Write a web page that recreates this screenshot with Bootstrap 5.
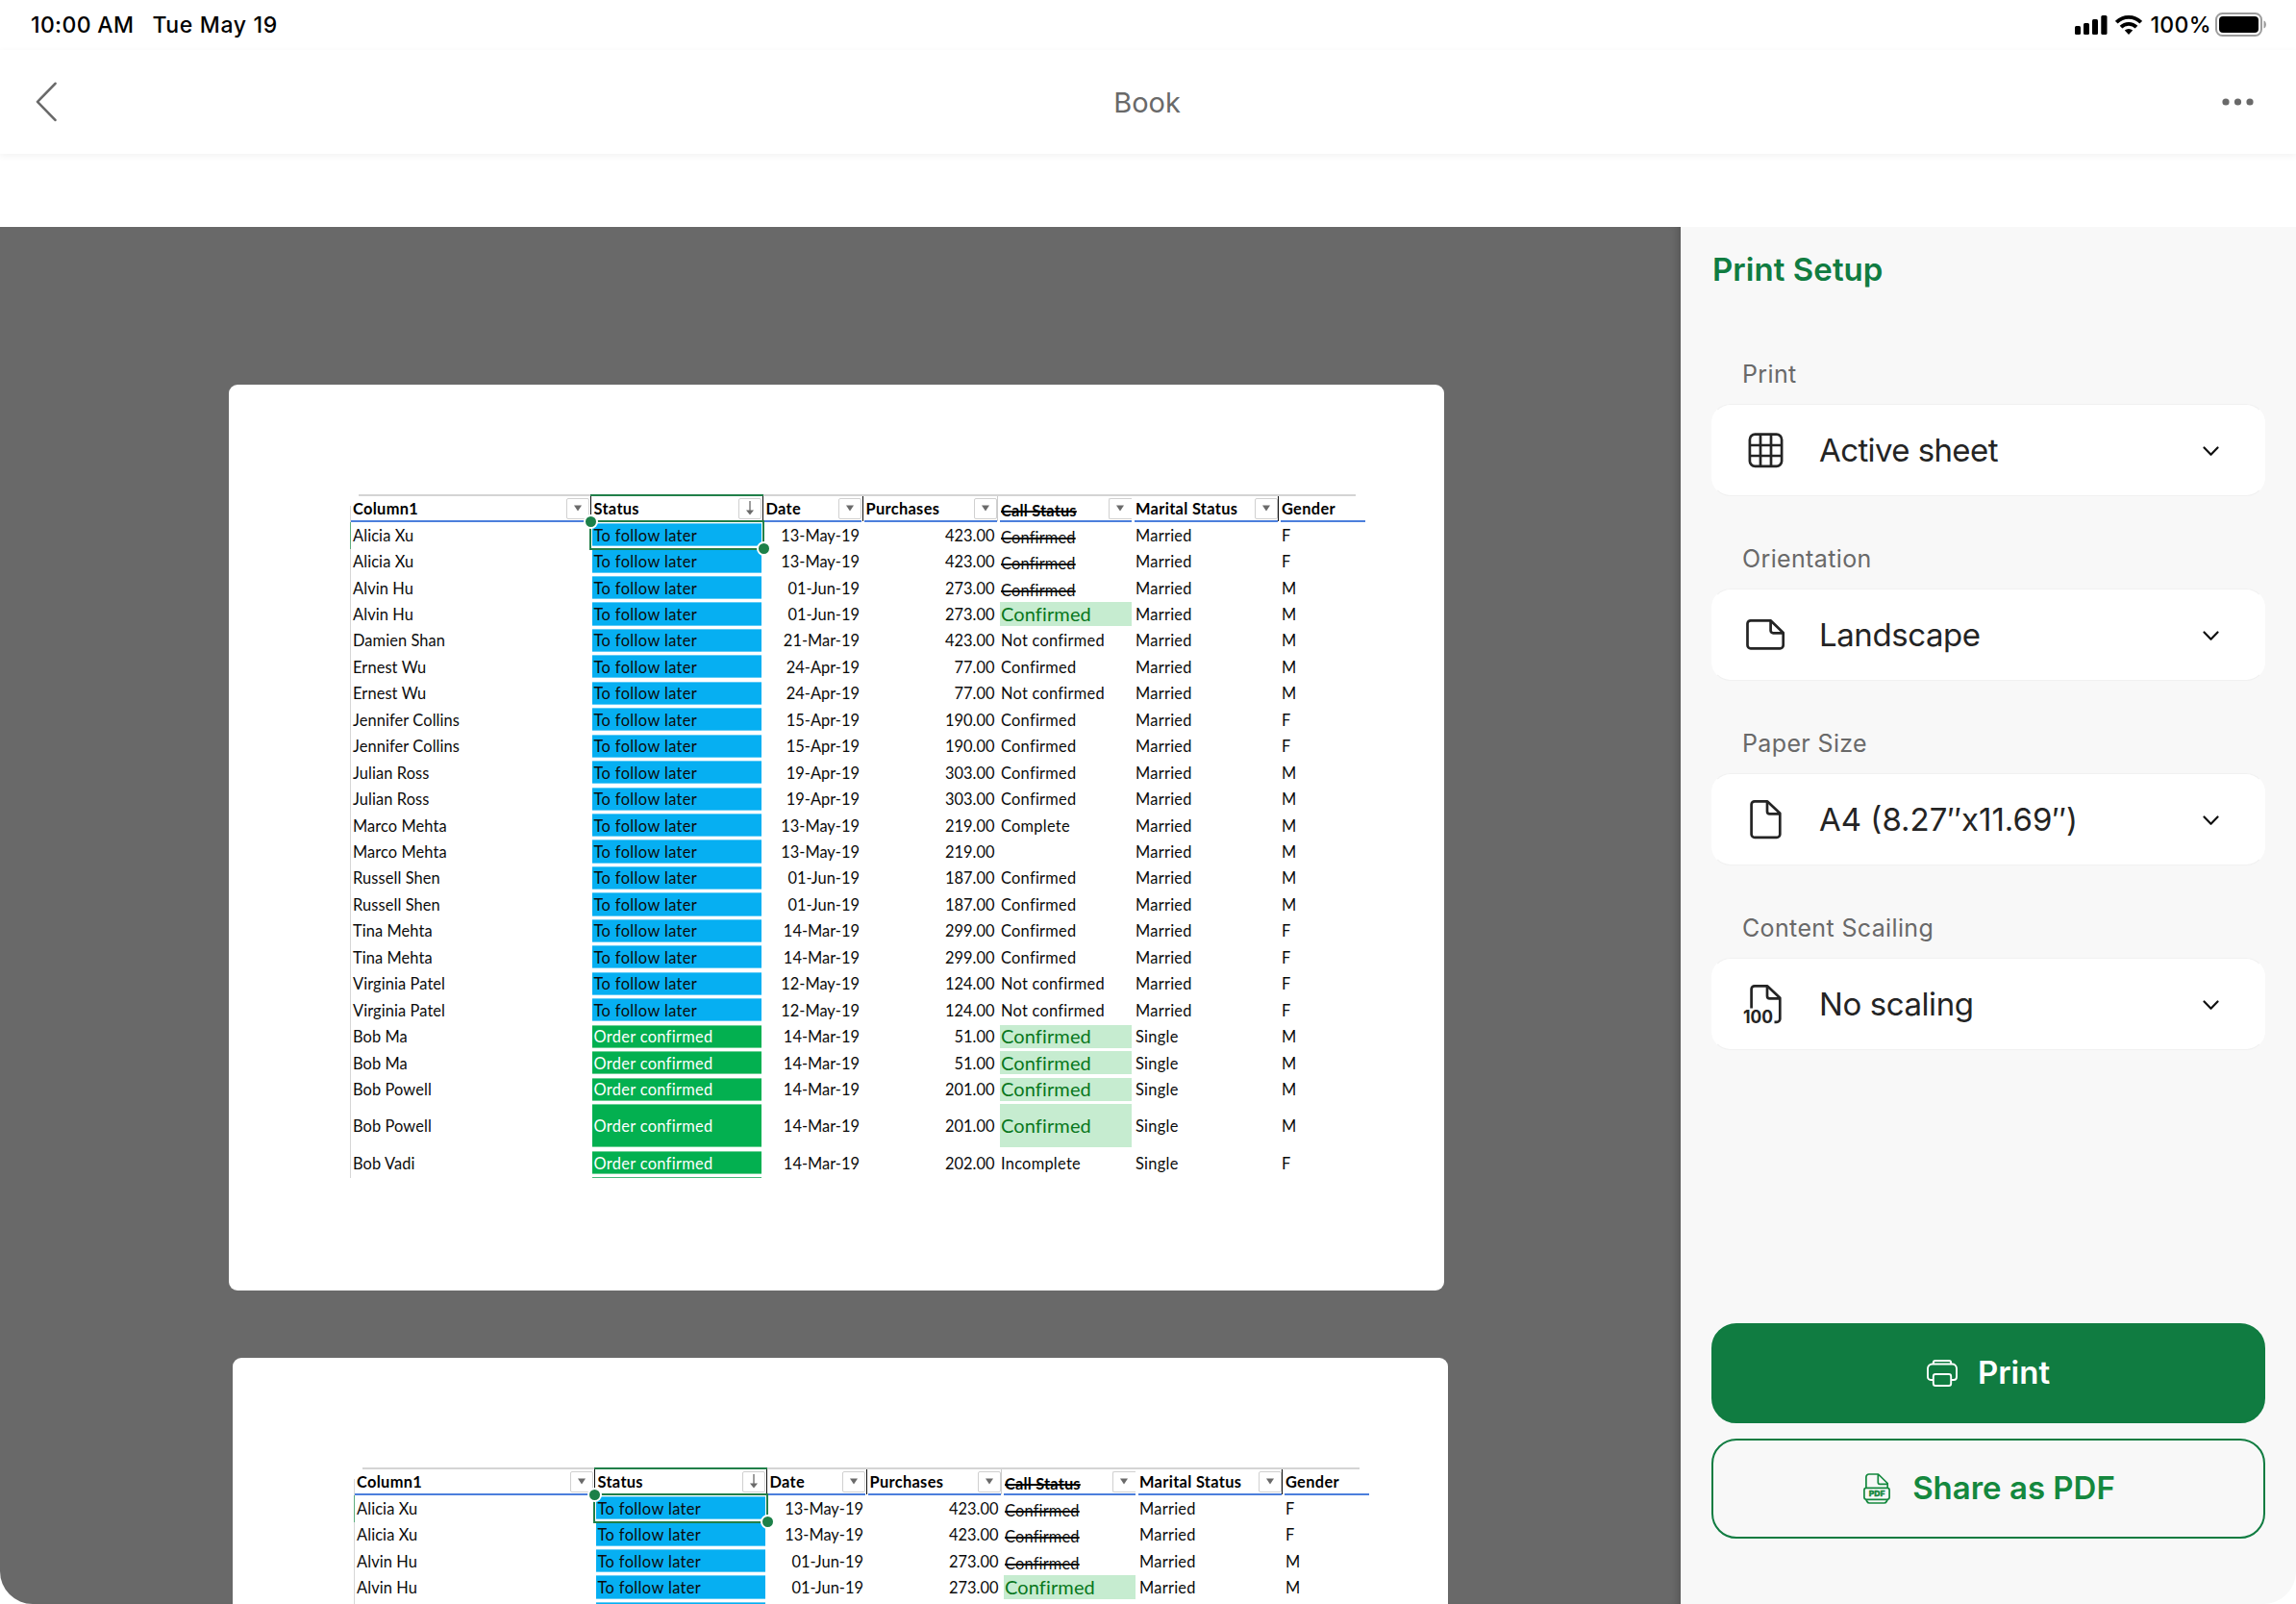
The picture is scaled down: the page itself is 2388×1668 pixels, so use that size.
<!DOCTYPE html>
<html lang="en">
<head>
<meta charset="utf-8">
<meta name="viewport" content="width=device-width, initial-scale=1">
<title>Book – Print Setup</title>
<link href="https://cdn.jsdelivr.net/npm/bootstrap@5.3.0/dist/css/bootstrap.min.css" rel="stylesheet">
<style>
  :root { --brand: #107c41; --ink: #242424; --muted: #696969; }
  body { font-family: Inter, "Liberation Sans", sans-serif; color: var(--ink); background: #fff; }
  svg { display: block; flex: none; }
  .screen { height: 1668px; }

  /* status bar and title bar */
  .statusbar { height: 52px; padding: 0 31px 0 32px; font-size: 23px; font-weight: 500; color: #000; letter-spacing: .36px; }
  .status-date { margin-left: 19px; letter-spacing: .66px; }
  .titlebar { height: 108px; padding: 0 44px 0 36px; color: var(--muted); box-shadow: 0 2px 7px rgba(0,0,0,.055); }
  .doc-title { font-size: 29px; line-height: 1; margin-left: 16px; }
  .ribbon-gap { height: 76px; }

  /* preview */
  .preview { width: 1748px; background: #696969; border-bottom-left-radius: 34px; padding: 164px 0 0 238px; box-shadow: inset -9px 0 8px -6px rgba(0,0,0,.18); }
  .sheet { width: 1264px; height: 942px; background: #fff; border-radius: 9px; padding: 114px 82px 0 126px; flex: none; }
  .sheet + .sheet { height: 400px; margin: 70px 0 0 4px; }

  .tgrid { font-family: Lato, Carlito, sans-serif; font-size: 16.4px; letter-spacing: .27px; line-height: 19px; color: #0b0b0b; width: 1056px; position: relative; }
  .tgrid::before { content: ""; position: absolute; top: 0; left: 9px; right: 10px; height: 2px; background: #d4d4d4; }
  .tgrid::after { content: ""; position: absolute; top: 12px; left: 0; height: 699px; border-left: 1px solid #d6d6d6; }
  .trow { display: grid; grid-template-columns: 249px 176px 101px 137.5px 137px 149px 88.5px; column-gap: 3px; height: 24.2px; margin-bottom: 3.28px; }
  .trow > div { display: flex; align-items: center; padding: 0 2px 0 1.5px; white-space: nowrap; }
  .trow > div:first-child { padding-left: 3px; letter-spacing: .1px; }
  .trow.hd { height: 29px; margin-bottom: 1px; font-weight: 700; color: #000; padding-top: 1px; }
  .trow.hd > div { border-bottom: 2px solid #4c7fdc; justify-content: space-between; padding-right: 0; position: relative; letter-spacing: .32px; }
  .trow.tall { height: 45.3px; margin-bottom: 3.7px; }
  .trow .num { justify-content: flex-end; letter-spacing: .02px; }
  .fill-blue { background: #06aff2; border: solid #5fcbf7; border-width: 1px 0; letter-spacing: .38px; }
  .fill-green { background: #03b050; border: solid #6bcf95; border-width: 1px 0; color: #fff; letter-spacing: .32px; }
  .fill-mint { background: #c6ecd0; color: #08771c; font-size: 20px; letter-spacing: .12px; }
  .struck { text-decoration: line-through; text-decoration-thickness: 1.5px; padding-top: 4px !important; letter-spacing: .18px; }
  .fbtn { width: 24px; height: 22px; border: 1px solid #d0d0d0; border-radius: 2px; background: #fff; display: flex; align-items: center; justify-content: center; margin-top: 1px; }
  .clip .fbtn { border-right: 0; border-radius: 2px 0 0 2px; }
  .rule::after { content: ""; position: absolute; left: -2.5px; top: 1px; height: 26px; border-left: 1.5px solid #111; }
  .rule.faint::after { border-color: #ccc; }
  .endline { width: 176px; height: 1px; background: #45b87a; margin-left: 252px; }
  .sel-head { position: absolute; left: 250px; top: 0; width: 180px; height: 2px; background: #217f49; }
  .sel-cell { position: absolute; left: 249px; top: 27px; width: 182px; height: 31px; border: 2px solid #217f49; box-shadow: inset 0 0 0 1px rgba(255,255,255,.65); }
  .sel-cell i { position: absolute; width: 15px; height: 15px; border-radius: 50%; background: #1c8048; border: 2px solid #fff; }
  .sel-cell i:first-child { left: -8.5px; top: -8px; }
  .sel-cell i:last-child { right: -8.5px; bottom: -8px; }
  .sel-edge { position: absolute; left: 0; top: 29px; height: 28px; border-left: 1px solid #5fae80; z-index: 1; }

  /* side panel */
  .side { width: 640px; background: #f8f8f8; border-bottom-right-radius: 34px; padding: 0 32px 68px; }
  .side h1 { font-size: 33px; font-weight: 600; color: var(--brand); line-height: 40px; margin: 24px 0 0 1px; letter-spacing: .05px; }
  .fields { margin-top: 73px; }
  .field-label { font-size: 25px; letter-spacing: .36px; line-height: 32px; color: var(--muted); margin: 49px 0 15px 32px; }
  .field-label:first-child { margin-top: 0; }
  .picker { height: 96px; border-radius: 20px; background: #fff; border: 1px solid #fff; border-top-color: #f1f1f1; border-bottom-color: #f1f1f1; padding: 0 47px 0 30px; }
  .picker-ic { width: 50px; height: 50px; }
  .picker-tx { font-size: 33px; line-height: 40px; margin-left: 31px; letter-spacing: -.42px; }
  .chev { margin: 3px 0 0 auto; }
  .act { height: 104px; border-radius: 26px; font-size: 33px; font-weight: 600; letter-spacing: 0; border: 2px solid var(--brand); }
  .act-print, .act-print:hover { background: var(--brand); color: #fff; }
  .act-share, .act-share:hover { color: #14883e; }
</style>
</head>
<body>
<div class="screen d-flex flex-column overflow-hidden">

  <div class="statusbar d-flex align-items-center flex-shrink-0">
    <span>10:00 AM</span><span class="status-date">Tue May 19</span>
    <div class="ms-auto d-flex align-items-center">
      <svg width="34" height="22" viewBox="0 0 34 22"><rect x="0" y="12" width="6" height="9" rx="1.5"/><rect x="9" y="9" width="6" height="12" rx="1.5"/><rect x="18" y="5" width="6" height="16" rx="1.5"/><rect x="27.3" y="1" width="6.2" height="20" rx="1.5"/></svg>
      <svg class="ms-2" width="28" height="20" viewBox="0 0 28 20"><g fill="none" stroke="#000" stroke-width="3.8"><path d="M1.3 7.2a18 18 0 0 1 25.4 0"/><path d="M6 12.1a11.3 11.3 0 0 1 16 0"/></g><path d="M14 20l-4.2-4.4a6 6 0 0 1 8.4 0z"/></svg>
      <span class="ms-2">100%</span>
      <svg class="ms-1" width="53" height="26" viewBox="0 0 53 26"><rect x="1" y="1" width="47" height="23" rx="6.5" fill="none" stroke="#9c9c9c" stroke-width="2"/><rect x="4" y="4" width="41" height="17" rx="4"/><path d="M50.500 8.500c3.200 1 3.200 7 0 8z" fill="#9c9c9c"/></svg>
    </div>
  </div>

  <div class="titlebar d-flex align-items-center justify-content-between flex-shrink-0">
    <svg width="24" height="42" viewBox="0 0 24 42" fill="none" stroke="#696969" stroke-width="2.6" stroke-linecap="round" stroke-linejoin="round"><path d="M21.5 1.8 3 20.8l18.500 19"/></svg>
    <span class="doc-title">Book</span>
    <svg width="34" height="8" viewBox="0 0 34 8" fill="#696969"><circle cx="5" cy="4" r="3.6"/><circle cx="17.500" cy="4" r="3.6"/><circle cx="30" cy="4" r="3.6"/></svg>
  </div>
  <div class="ribbon-gap flex-shrink-0"></div>

  <div class="d-flex flex-grow-1" style="min-height:0">
    <main class="preview d-flex flex-column overflow-hidden">
      <div class="sheet"><div class="tgrid"></div></div>
      <div class="sheet"><div class="tgrid"></div></div>
    </main>

    <aside class="side d-flex flex-column">
      <h1>Print Setup</h1>
      <div class="fields">
        <div class="field-label">Print</div>
        <div class="picker d-flex align-items-center">
          <svg class="picker-ic" viewBox="0 0 50 50" fill="none" stroke="#242424" stroke-width="2.7"><rect x="8.900" y="8.700" width="33.200" height="33.200" rx="5.500"/><path d="M20 9v33M31 9v33M9 20h33M9 31h33"/></svg>
          <span class="picker-tx" style="letter-spacing:-.6px">Active sheet</span>
          <svg class="chev" width="17" height="11" viewBox="0 0 17 11" fill="none" stroke="#111" stroke-width="2.2" stroke-linecap="round" stroke-linejoin="round"><path d="M1.500 1.500l7 7.300 7-7.300"/></svg>
        </div>
        <div class="field-label">Orientation</div>
        <div class="picker d-flex align-items-center">
          <svg class="picker-ic" viewBox="0 0 50 50" fill="none" stroke="#242424" stroke-width="2.7" stroke-linejoin="round"><path d="M9.800 10.300H30.500L43.700 23V36a3.300 3.300 0 0 1-3.300 3.300H9.800A3.300 3.300 0 0 1 6.500 36V13.600a3.300 3.300 0 0 1 3.300-3.300z"/><path d="M30.600 10.500v10.200a2.600 2.600 0 0 0 2.600 2.600h10.300"/></svg>
          <span class="picker-tx">Landscape</span>
          <svg class="chev" width="17" height="11" viewBox="0 0 17 11" fill="none" stroke="#111" stroke-width="2.2" stroke-linecap="round" stroke-linejoin="round"><path d="M1.500 1.500l7 7.300 7-7.300"/></svg>
        </div>
        <div class="field-label">Paper Size</div>
        <div class="picker d-flex align-items-center">
          <svg class="picker-ic" viewBox="0 0 50 50" fill="none" stroke="#242424" stroke-width="2.7" stroke-linejoin="round"><path d="M13.900 6.300H27L40.300 18.700V40.500a3.300 3.300 0 0 1-3.300 3.300H13.900a3.300 3.300 0 0 1-3.300-3.300V9.600a3.300 3.300 0 0 1 3.300-3.300z"/><path d="M27 6.500v10.300a2.600 2.600 0 0 0 2.600 2.600h10.500"/></svg>
          <span class="picker-tx" style="letter-spacing:0">A4 (8.27″x11.69″)</span>
          <svg class="chev" width="17" height="11" viewBox="0 0 17 11" fill="none" stroke="#111" stroke-width="2.2" stroke-linecap="round" stroke-linejoin="round"><path d="M1.500 1.500l7 7.300 7-7.300"/></svg>
        </div>
        <div class="field-label">Content Scailing</div>
        <div class="picker d-flex align-items-center">
          <svg class="picker-ic" viewBox="0 0 50 50" fill="none" stroke="#242424" stroke-width="2.700" stroke-linejoin="round"><path d="M10.600 29.500V9.600a3.300 3.300 0 0 1 3.300-3.300H27L40.300 18.700V40.500a3.300 3.300 0 0 1-3.300 3.300H34.500"/><path d="M27 6.500v10.300a2.600 2.600 0 0 0 2.600 2.600h10.500"/><text x="2" y="45" font-size="18.500" font-weight="700" textLength="31" lengthAdjust="spacingAndGlyphs" fill="#242424" stroke="none">100</text></svg>
          <span class="picker-tx">No scaling</span>
          <svg class="chev" width="17" height="11" viewBox="0 0 17 11" fill="none" stroke="#111" stroke-width="2.2" stroke-linecap="round" stroke-linejoin="round"><path d="M1.500 1.500l7 7.300 7-7.300"/></svg>
        </div>
      </div>

      <div class="mt-auto d-flex flex-column gap-3">
        <button type="button" class="btn act act-print d-flex align-items-center justify-content-center">
          <svg width="32" height="28" viewBox="0 0 32 28" fill="none" stroke="#fff" stroke-width="1.900" style="margin-right:21px"><path d="M6.800 4V3.200A2.200 2.200 0 0 1 9 1h14a2.200 2.200 0 0 1 2.200 2.200V4"/><path d="M6.800 21H4a3 3 0 0 1-3-3V9a4.500 4.500 0 0 1 4.500-4.500h21A4.500 4.500 0 0 1 31 9v9a3 3 0 0 1-3 3h-2.800"/><rect x="6.800" y="15" width="18.400" height="12" rx="2.300"/></svg>
          <span>Print</span>
        </button>
        <button type="button" class="btn act act-share d-flex align-items-center justify-content-center">
          <svg width="28" height="32" viewBox="0 0 28 32" fill="none" stroke="#14883e" stroke-width="1.700" stroke-linejoin="round" style="margin:0 23px 0 2px"><path d="M2.900 15V4A3 3 0 0 1 5.900 1H15.500L25.200 10.500V15M15.300 1v8.600A1.700 1.700 0 0 0 17 11.300h8"/><rect x=".9" y="15.300" width="26.200" height="12" rx="2.200"/><path d="M2.900 27.500l1 2A2.800 2.800 0 0 0 6.400 31h15.200a2.800 2.800 0 0 0 2.500-1.500l1-2"/><text x="5.700" y="24.200" font-size="8" font-weight="800" textLength="16.800" lengthAdjust="spacingAndGlyphs" fill="#14883e" stroke="#14883e" stroke-width=".4">PDF</text></svg>
          <span>Share as PDF</span>
        </button>
      </div>
    </aside>
  </div>
</div>

<script src="https://cdn.jsdelivr.net/npm/bootstrap@5.3.0/dist/js/bootstrap.bundle.min.js"></script>
<script>
  // name, status (L = to follow later, O = order confirmed), date, amount, call status, marital status, gender
  // "~" marks a struck-out call status, "+" a highlighted one
  const rows = `Alicia Xu|L|13-May-19|423.00|~Confirmed|Married|F
Alicia Xu|L|13-May-19|423.00|~Confirmed|Married|F
Alvin Hu|L|01-Jun-19|273.00|~Confirmed|Married|M
Alvin Hu|L|01-Jun-19|273.00|+Confirmed|Married|M
Damien Shan|L|21-Mar-19|423.00|Not confirmed|Married|M
Ernest Wu|L|24-Apr-19|77.00|Confirmed|Married|M
Ernest Wu|L|24-Apr-19|77.00|Not confirmed|Married|M
Jennifer Collins|L|15-Apr-19|190.00|Confirmed|Married|F
Jennifer Collins|L|15-Apr-19|190.00|Confirmed|Married|F
Julian Ross|L|19-Apr-19|303.00|Confirmed|Married|M
Julian Ross|L|19-Apr-19|303.00|Confirmed|Married|M
Marco Mehta|L|13-May-19|219.00|Complete|Married|M
Marco Mehta|L|13-May-19|219.00||Married|M
Russell Shen|L|01-Jun-19|187.00|Confirmed|Married|M
Russell Shen|L|01-Jun-19|187.00|Confirmed|Married|M
Tina Mehta|L|14-Mar-19|299.00|Confirmed|Married|F
Tina Mehta|L|14-Mar-19|299.00|Confirmed|Married|F
Virginia Patel|L|12-May-19|124.00|Not confirmed|Married|F
Virginia Patel|L|12-May-19|124.00|Not confirmed|Married|F
Bob Ma|O|14-Mar-19|51.00|+Confirmed|Single|M
Bob Ma|O|14-Mar-19|51.00|+Confirmed|Single|M
Bob Powell|O|14-Mar-19|201.00|+Confirmed|Single|M
Bob Powell|O|14-Mar-19|201.00|+Confirmed|Single|M
Bob Vadi|O|14-Mar-19|202.00|Incomplete|Single|F`.split("\n").map(r => r.split("|"));

  const tri = '<span class="fbtn"><svg width="8" height="7" viewBox="0 0 8 7"><path d="M0 .5h8L4 6.500z" fill="#6a6a6a"/></svg></span>';
  const arrow = '<span class="fbtn"><svg width="10" height="15" viewBox="0 0 10 15"><path d="M5 0v11" stroke="#6a6a6a" stroke-width="1.300"/><path d="M1 9.500h8L5 14.500z" fill="#6a6a6a"/></svg></span>';
  const head = `<div class="trow hd"><div>Column1${tri}</div><div class="rule">Status${arrow}</div><div class="rule">Date${tri}</div><div class="rule">Purchases${tri}</div><div class="rule faint clip"><span class="struck">Call Status</span>${tri}</div><div>Marital Status${tri}</div><div class="rule">Gender</div></div>`;
  const line = ([name, st, date, amt, call, marital, sex], i) => {
    const cls = call[0] === "~" ? "struck" : call[0] === "+" ? "fill-mint" : "";
    return `<div class="trow${i === 22 ? " tall" : ""}"><div>${name}</div><div class="${st === "L" ? "fill-blue" : "fill-green"}">${st === "L" ? "To follow later" : "Order confirmed"}</div><div class="num">${date}</div><div class="num">${amt}</div><div class="${cls}">${call.replace(/^[~+]/, "")}</div><div>${marital}</div><div>${sex}</div></div>`;
  };
  const overlay = '<div class="sel-edge"></div><div class="sel-head"></div><div class="sel-cell"><i></i><i></i></div>';
  const [first, second] = document.querySelectorAll(".tgrid");
  first.innerHTML = head + rows.map(line).join("") + '<div class="endline"></div>' + overlay;
  // the second page is scrolled in by four rows and the top edge of a fifth
  second.innerHTML = head + rows.slice(0, 4).map(line).join("") + '<div class="trow"><div></div><div class="fill-blue"></div></div>' + overlay;
</script>
</body>
</html>
